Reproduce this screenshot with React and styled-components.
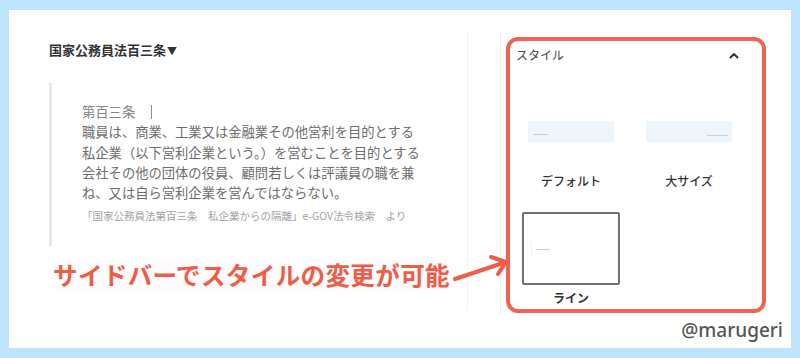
import React from "react";
import styled, { createGlobalStyle } from "styled-components";

const Global = createGlobalStyle`
  html, body { margin: 0; padding: 0; }
  body {
    background: #bee5fb;
    font-family: "Noto Sans CJK JP", "Noto Sans", sans-serif;
    width: 800px;
    height: 358px;
    overflow: hidden;
  }
`;

const Card = styled.div`
  position: relative;
  margin: 10px 9px;
  height: 338px;
  background: #ffffff;
  display: flex;
  align-items: flex-start;
  padding-top: 22px;
  box-sizing: border-box;
`;

const Main = styled.div`
  width: 459px;
  height: 278px;
  box-sizing: border-box;
  border-right: 1px solid #f1f1f1;
  padding: 9px 0 0 40px;
  display: flex;
  flex-direction: column;
  align-items: flex-start;
  position: relative;
  z-index: 2;
`;

const Title = styled.div`
  font-size: 13px;
  line-height: 18px;
  font-weight: 700;
  color: #333;
  white-space: nowrap;
`;

const Caret = styled.span`
  font-size: 10px;
  margin-left: 1px;
`;

const Quote = styled.div`
  margin-top: 23px;
  border-left: 3px solid #e8e8e8;
  padding: 19px 0 22px 30px;
  width: 380px;
  box-sizing: border-box;
`;

const QuoteText = styled.div`
  font-size: 13.3px;
  line-height: 20.3px;
  color: ${(p) => (p.$head ? "#858585" : "#6d6d6d")};
  white-space: nowrap;
  display: flex;
  align-items: center;
`;

const QuoteBody = styled.div`
  font-size: 13.3px;
  line-height: 20.3px;
  color: #6d6d6d;
  white-space: nowrap;
`;

const HeadBar = styled.span`
  display: inline-block;
  width: 1px;
  height: 14px;
  background: #8a8a8a;
  margin-left: 16px;
`;

const Cite = styled.div`
  margin-top: 5px;
  font-size: 10.5px;
  line-height: 16px;
  color: #a3a3a3;
  white-space: nowrap;
`;

const Note = styled.div`
  margin-top: 14px;
  margin-left: 4px;
  display: flex;
  align-items: flex-start;
`;

const NoteText = styled.span`
  font-size: 24.5px;
  line-height: 30px;
  font-weight: 700;
  letter-spacing: 0.4px;
  color: #ef5c47;
  white-space: nowrap;
  background: #fcfcfc;
`;

const Arrow = styled.svg`
  flex: none;
  margin-left: 3px;
  margin-top: -1px;
  overflow: visible;
`;

const Sidebar = styled.div`
  margin-left: 32px;
  height: 278px;
  border-left: 1px solid #eeeeee;
  padding: 5px 0 0 5px;
`;

const Panel = styled.div`
  width: 260px;
  height: 276px;
  box-sizing: border-box;
  border: 4px solid #ef6450;
  border-radius: 12px;
  display: flex;
  flex-direction: column;
`;

const PanelHeader = styled.div`
  display: flex;
  align-items: center;
  justify-content: space-between;
  padding: 6px 23px 0 6px;
  height: 16px;
`;

const PanelTitle = styled.span`
  font-size: 12px;
  line-height: 16px;
  color: #444;
`;

const StyleGrid = styled.div`
  display: grid;
  grid-template-columns: 98px 98px;
  column-gap: 20px;
  row-gap: 23px;
  padding: 32px 0 0 12px;
`;

const StyleItem = styled.div`
  display: flex;
  flex-direction: column;
  align-items: center;
`;

const PreviewFrame = styled.div`
  width: 98px;
  height: 73px;
  box-sizing: border-box;
  display: flex;
  align-items: center;
  justify-content: center;
  border: ${(p) => (p.$selected ? "2px solid #707070" : "none")};
  border-radius: 2px;
  position: relative;
`;

const PreviewBox = styled.div`
  width: 86px;
  height: 21px;
  background: #edf6fd;
  display: flex;
  align-items: flex-end;
  justify-content: ${(p) => (p.$align === "right" ? "flex-end" : "flex-start")};
  padding: 0 4px ${(p) => (p.$align === "right" ? "6px" : "7px")} 5px;
  box-sizing: border-box;
`;

const Tiny = styled.span`
  display: block;
  width: ${(p) => p.$w}px;
  height: 1px;
  background: #cfcfcf;
`;

const LineInner = styled.div`
  position: absolute;
  left: 7px;
  top: 28px;
  height: 14px;
  border-left: 1px solid #f0f0f0;
  display: flex;
  align-items: center;
  padding-left: 4px;
`;

const Label = styled.div`
  margin-top: 5px;
  font-size: 12px;
  line-height: 16px;
  font-weight: ${(p) => (p.$bold ? 700 : 500)};
  color: #333;
  white-space: nowrap;
`;

const Watermark = styled.div`
  position: absolute;
  right: 8px;
  bottom: 8px;
  font-family: "Noto Sans", sans-serif;
  font-size: 19px;
  line-height: 20px;
  font-weight: 500;
  color: #555;
`;

function Chevron() {
  return (
    <svg width="10" height="7" viewBox="0 0 10 7">
      <path d="M1.5 5.5 L5 2 L8.5 5.5" fill="none" stroke="#333" strokeWidth="2" strokeLinecap="round" strokeLinejoin="round" />
    </svg>
  );
}

export default function App() {
  return (
    <>
      <Global />
      <Card>
        <Main>
          <Title>
            国家公務員法百三条<Caret>▼</Caret>
          </Title>
          <Quote>
            <QuoteText $head>
              第百三条
              <HeadBar />
            </QuoteText>
            <QuoteBody>
              職員は、商業、工業又は金融業その他営利を目的とする
              <br />
              私企業（以下営利企業という。）を営むことを目的とする
              <br />
              会社その他の団体の役員、顧問若しくは評議員の職を兼
              <br />
              ね、又は自ら営利企業を営んではならない。
            </QuoteBody>
            <Cite>「国家公務員法第百三条　私企業からの隔離」e-GOV法令検索　より</Cite>
          </Quote>
          <Note>
            <NoteText>サイドバーでスタイルの変更が可能</NoteText>
            <Arrow width="56" height="24" viewBox="0 0 56 24">
              <path d="M2 20 L53 3" fill="none" stroke="#ef5c47" strokeWidth="4" strokeLinecap="round" />
              <path d="M38 -2 L53 3 L45 15" fill="none" stroke="#ef5c47" strokeWidth="4" strokeLinecap="round" strokeLinejoin="round" />
            </Arrow>
          </Note>
        </Main>
        <Sidebar>
          <Panel>
            <PanelHeader>
              <PanelTitle>スタイル</PanelTitle>
              <Chevron />
            </PanelHeader>
            <StyleGrid>
              <StyleItem>
                <PreviewFrame>
                  <PreviewBox>
                    <Tiny $w={15} />
                  </PreviewBox>
                </PreviewFrame>
                <Label>デフォルト</Label>
              </StyleItem>
              <StyleItem>
                <PreviewFrame>
                  <PreviewBox $align="right">
                    <Tiny $w={21} />
                  </PreviewBox>
                </PreviewFrame>
                <Label>大サイズ</Label>
              </StyleItem>
              <StyleItem>
                <PreviewFrame $selected>
                  <LineInner>
                    <Tiny $w={14} />
                  </LineInner>
                </PreviewFrame>
                <Label $bold>ライン</Label>
              </StyleItem>
            </StyleGrid>
          </Panel>
        </Sidebar>
        <Watermark>@marugeri</Watermark>
      </Card>
    </>
  );
}
